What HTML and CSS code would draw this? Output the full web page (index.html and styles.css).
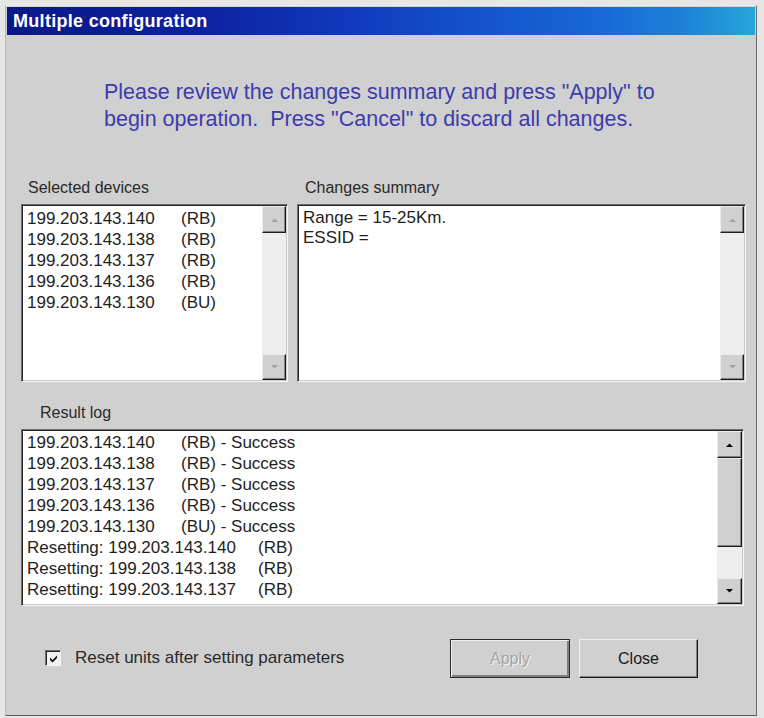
FILE: index.html
```html
<!DOCTYPE html>
<html>
<head>
<meta charset="utf-8">
<title>Multiple configuration</title>
<link rel="stylesheet" href="styles.css">
</head>
<body>
<div class="window">
  <div class="titlebar"><span class="title">Multiple configuration</span></div>
  <div class="content">
    <p class="intro">Please review the changes summary and press "Apply" to<br>begin operation.&nbsp; Press "Cancel" to discard all changes.</p>

    <div class="top-row">
      <div class="group devices">
        <div class="label">Selected devices</div>
        <div class="listbox">
          <div class="items">
            <div class="row"><span class="ip">199.203.143.140</span><span>(RB)</span></div>
            <div class="row"><span class="ip">199.203.143.138</span><span>(RB)</span></div>
            <div class="row"><span class="ip">199.203.143.137</span><span>(RB)</span></div>
            <div class="row"><span class="ip">199.203.143.136</span><span>(RB)</span></div>
            <div class="row"><span class="ip">199.203.143.130</span><span>(BU)</span></div>
          </div>
          <div class="scrollbar">
            <div class="sb-btn sb-up disabled"><svg width="9" height="6" viewBox="0 0 9 6"><path d="M1 5 L4.5 1.5 L8 5 Z"/></svg></div>
            <div class="sb-track"></div>
            <div class="sb-btn sb-down disabled"><svg width="9" height="6" viewBox="0 0 9 6"><path d="M1 1 L4.5 4.5 L8 1 Z"/></svg></div>
          </div>
        </div>
      </div>

      <div class="group summary">
        <div class="label">Changes summary</div>
        <div class="listbox">
          <div class="items summary-items">
            <div class="row">Range = 15-25Km.</div>
            <div class="row">ESSID =</div>
          </div>
          <div class="scrollbar">
            <div class="sb-btn sb-up disabled"><svg width="9" height="6" viewBox="0 0 9 6"><path d="M1 5 L4.5 1.5 L8 5 Z"/></svg></div>
            <div class="sb-track"></div>
            <div class="sb-btn sb-down disabled"><svg width="9" height="6" viewBox="0 0 9 6"><path d="M1 1 L4.5 4.5 L8 1 Z"/></svg></div>
          </div>
        </div>
      </div>
    </div>

    <div class="group log">
      <div class="label">Result log</div>
      <div class="listbox">
        <div class="items log-items">
          <div class="row"><span class="ip">199.203.143.140</span><span>(RB) - Success</span></div>
          <div class="row"><span class="ip">199.203.143.138</span><span>(RB) - Success</span></div>
          <div class="row"><span class="ip">199.203.143.137</span><span>(RB) - Success</span></div>
          <div class="row"><span class="ip">199.203.143.136</span><span>(RB) - Success</span></div>
          <div class="row"><span class="ip">199.203.143.130</span><span>(BU) - Success</span></div>
          <div class="row"><span class="reset">Resetting: 199.203.143.140</span><span>(RB)</span></div>
          <div class="row"><span class="reset">Resetting: 199.203.143.138</span><span>(RB)</span></div>
          <div class="row"><span class="reset">Resetting: 199.203.143.137</span><span>(RB)</span></div>
        </div>
        <div class="scrollbar">
          <div class="sb-btn sb-up"><svg width="9" height="6" viewBox="0 0 9 6"><path d="M1 5 L4.5 1.5 L8 5 Z"/></svg></div>
          <div class="sb-thumb"></div>
          <div class="sb-track"></div>
          <div class="sb-btn sb-down"><svg width="9" height="6" viewBox="0 0 9 6"><path d="M1 1 L4.5 4.5 L8 1 Z"/></svg></div>
        </div>
      </div>
    </div>

    <div class="bottom-row">
      <label class="check">
        <span class="checkbox"><svg width="11" height="11" viewBox="0 0 11 11"><path d="M2 4.5 L4.5 7 L9 2.5 L9 5 L4.5 9.5 L2 7 Z"/></svg></span>
        <span class="check-label">Reset units after setting parameters</span>
      </label>
      <div class="buttons">
        <div class="btn btn-default disabled"><span>Apply</span></div>
        <div class="btn"><span>Close</span></div>
      </div>
    </div>
  </div>
</div>
</body>
</html>
```

FILE: styles.css
```css
html, body {
  margin: 0;
  padding: 0;
}
body {
  background: #e6e6e6;
  width: 764px;
  height: 718px;
  overflow: hidden;
  font-family: "Liberation Sans", Arial, sans-serif;
}
.window {
  box-sizing: border-box;
  margin: 5px 0 0 5px;
  width: 752px;
  height: 711px;
  background: #d0d0d0;
  border: 1px solid;
  border-color: #ececec #6a6a6a #5a5a5a #b8b8b8;
  padding: 1px;
  display: flex;
  flex-direction: column;
}
.titlebar {
  height: 28px;
  flex: none;
  display: flex;
  align-items: center;
  padding-left: 6px;
  background: linear-gradient(to right, #0a1888 0%, #0c21a0 25%, #1038bc 45%, #1452cc 62%, #1766d6 78%, #1c80d8 90%, #26a6d8 100%);
}
.title {
  color: #ffffff;
  font-weight: bold;
  font-size: 18px;
  letter-spacing: 0.3px;
}
.content {
  flex: 1;
  padding: 0 0 0 14px;
  display: flex;
  flex-direction: column;
}
.intro {
  margin: 44px 0 0 83px;
  font-size: 21.5px;
  line-height: 27px;
  color: #3c3cac;
}
.label {
  font-size: 16px;
  line-height: 18px;
  color: #2a2a2a;
  margin-bottom: 7px;
}
.top-row {
  margin-top: 46px;
  display: flex;
  gap: 9px;
}
.devices .label { padding-left: 7px; }
.summary .label { padding-left: 8px; }
.log .label { padding-left: 19px; }
.listbox {
  box-sizing: border-box;
  background: #ffffff;
  border: 1px solid;
  border-color: #6e6e6e #f6f6f6 #f6f6f6 #6e6e6e;
  box-shadow: inset 1px 1px 0 #262626, inset -1px -1px 0 #c8c8c8;
  display: flex;
  padding: 1px;
}
.devices .listbox { width: 267px; height: 178px; }
.summary .listbox { width: 449px; height: 178px; }
.log { margin-top: 22px; }
.log .listbox { width: 723px; height: 177px; }
.items {
  flex: 1;
  padding: 2px 0 0 4px;
  font-size: 17px;
  line-height: 21px;
  color: #1e1e1e;
  white-space: nowrap;
}
.summary-items { line-height: 20px; padding-left: 4px; }
.log-items { padding-top: 1px; }
.row { display: flex; }
.ip { width: 154px; flex: none; }
.reset { width: 231px; flex: none; }
.scrollbar {
  width: 24px;
  flex: none;
  display: flex;
  flex-direction: column;
  background: #eeeeee;
}
.log .scrollbar { width: 25px; }
.sb-btn {
  box-sizing: border-box;
  height: 26px;
  flex: none;
  background: #d0d0d0;
  border: 1px solid;
  border-color: #ececec #1e1e1e #1e1e1e #ececec;
  box-shadow: inset -1px -1px 0 #808080;
  display: flex;
  align-items: center;
  justify-content: center;
}
.sb-up { height: 27px; }
.sb-btn svg path { fill: #000000; }
.sb-btn.disabled svg path { fill: #a2a2a2; }
.sb-track { flex: 1; }
.sb-thumb {
  box-sizing: border-box;
  height: 89px;
  flex: none;
  background: #d0d0d0;
  border: 1px solid;
  border-color: #ececec #1e1e1e #1e1e1e #ececec;
  box-shadow: inset -1px -1px 0 #808080;
}
.bottom-row {
  margin-top: 33px;
  display: flex;
  align-items: center;
  justify-content: space-between;
  padding-right: 57px;
}
.check {
  display: flex;
  align-items: center;
  margin-left: 24px;
  margin-top: -1px;
}
.checkbox {
  box-sizing: border-box;
  width: 16px;
  height: 16px;
  background: #f0f0f0;
  border: 1px solid;
  border-color: #6e6e6e #f6f6f6 #f6f6f6 #6e6e6e;
  box-shadow: inset 1px 1px 0 #262626;
  display: flex;
  align-items: center;
  justify-content: center;
}
.checkbox svg path { fill: #111111; }
.check-label {
  margin-left: 14px;
  font-size: 17px;
  color: #2a2a2a;
}
.buttons {
  display: flex;
  gap: 9px;
}
.btn {
  box-sizing: border-box;
  width: 119px;
  height: 39px;
  background: #d0d0d0;
  border: 1px solid;
  border-color: #f0f0f0 #1a1a1a #1a1a1a #f0f0f0;
  box-shadow: inset -1px -1px 0 #7e7e7e;
  display: flex;
  align-items: center;
  justify-content: center;
  font-size: 16px;
  color: #1a1a1a;
}
.btn-default {
  width: 120px;
  border-color: #2a2a2a;
  box-shadow: inset 1px 1px 0 #f0f0f0, inset -2px -2px 0 #7e7e7e;
}
.btn.disabled span {
  color: #a4a4a4;
  text-shadow: 1px 1px 0 #f4f4f4;
}
```
